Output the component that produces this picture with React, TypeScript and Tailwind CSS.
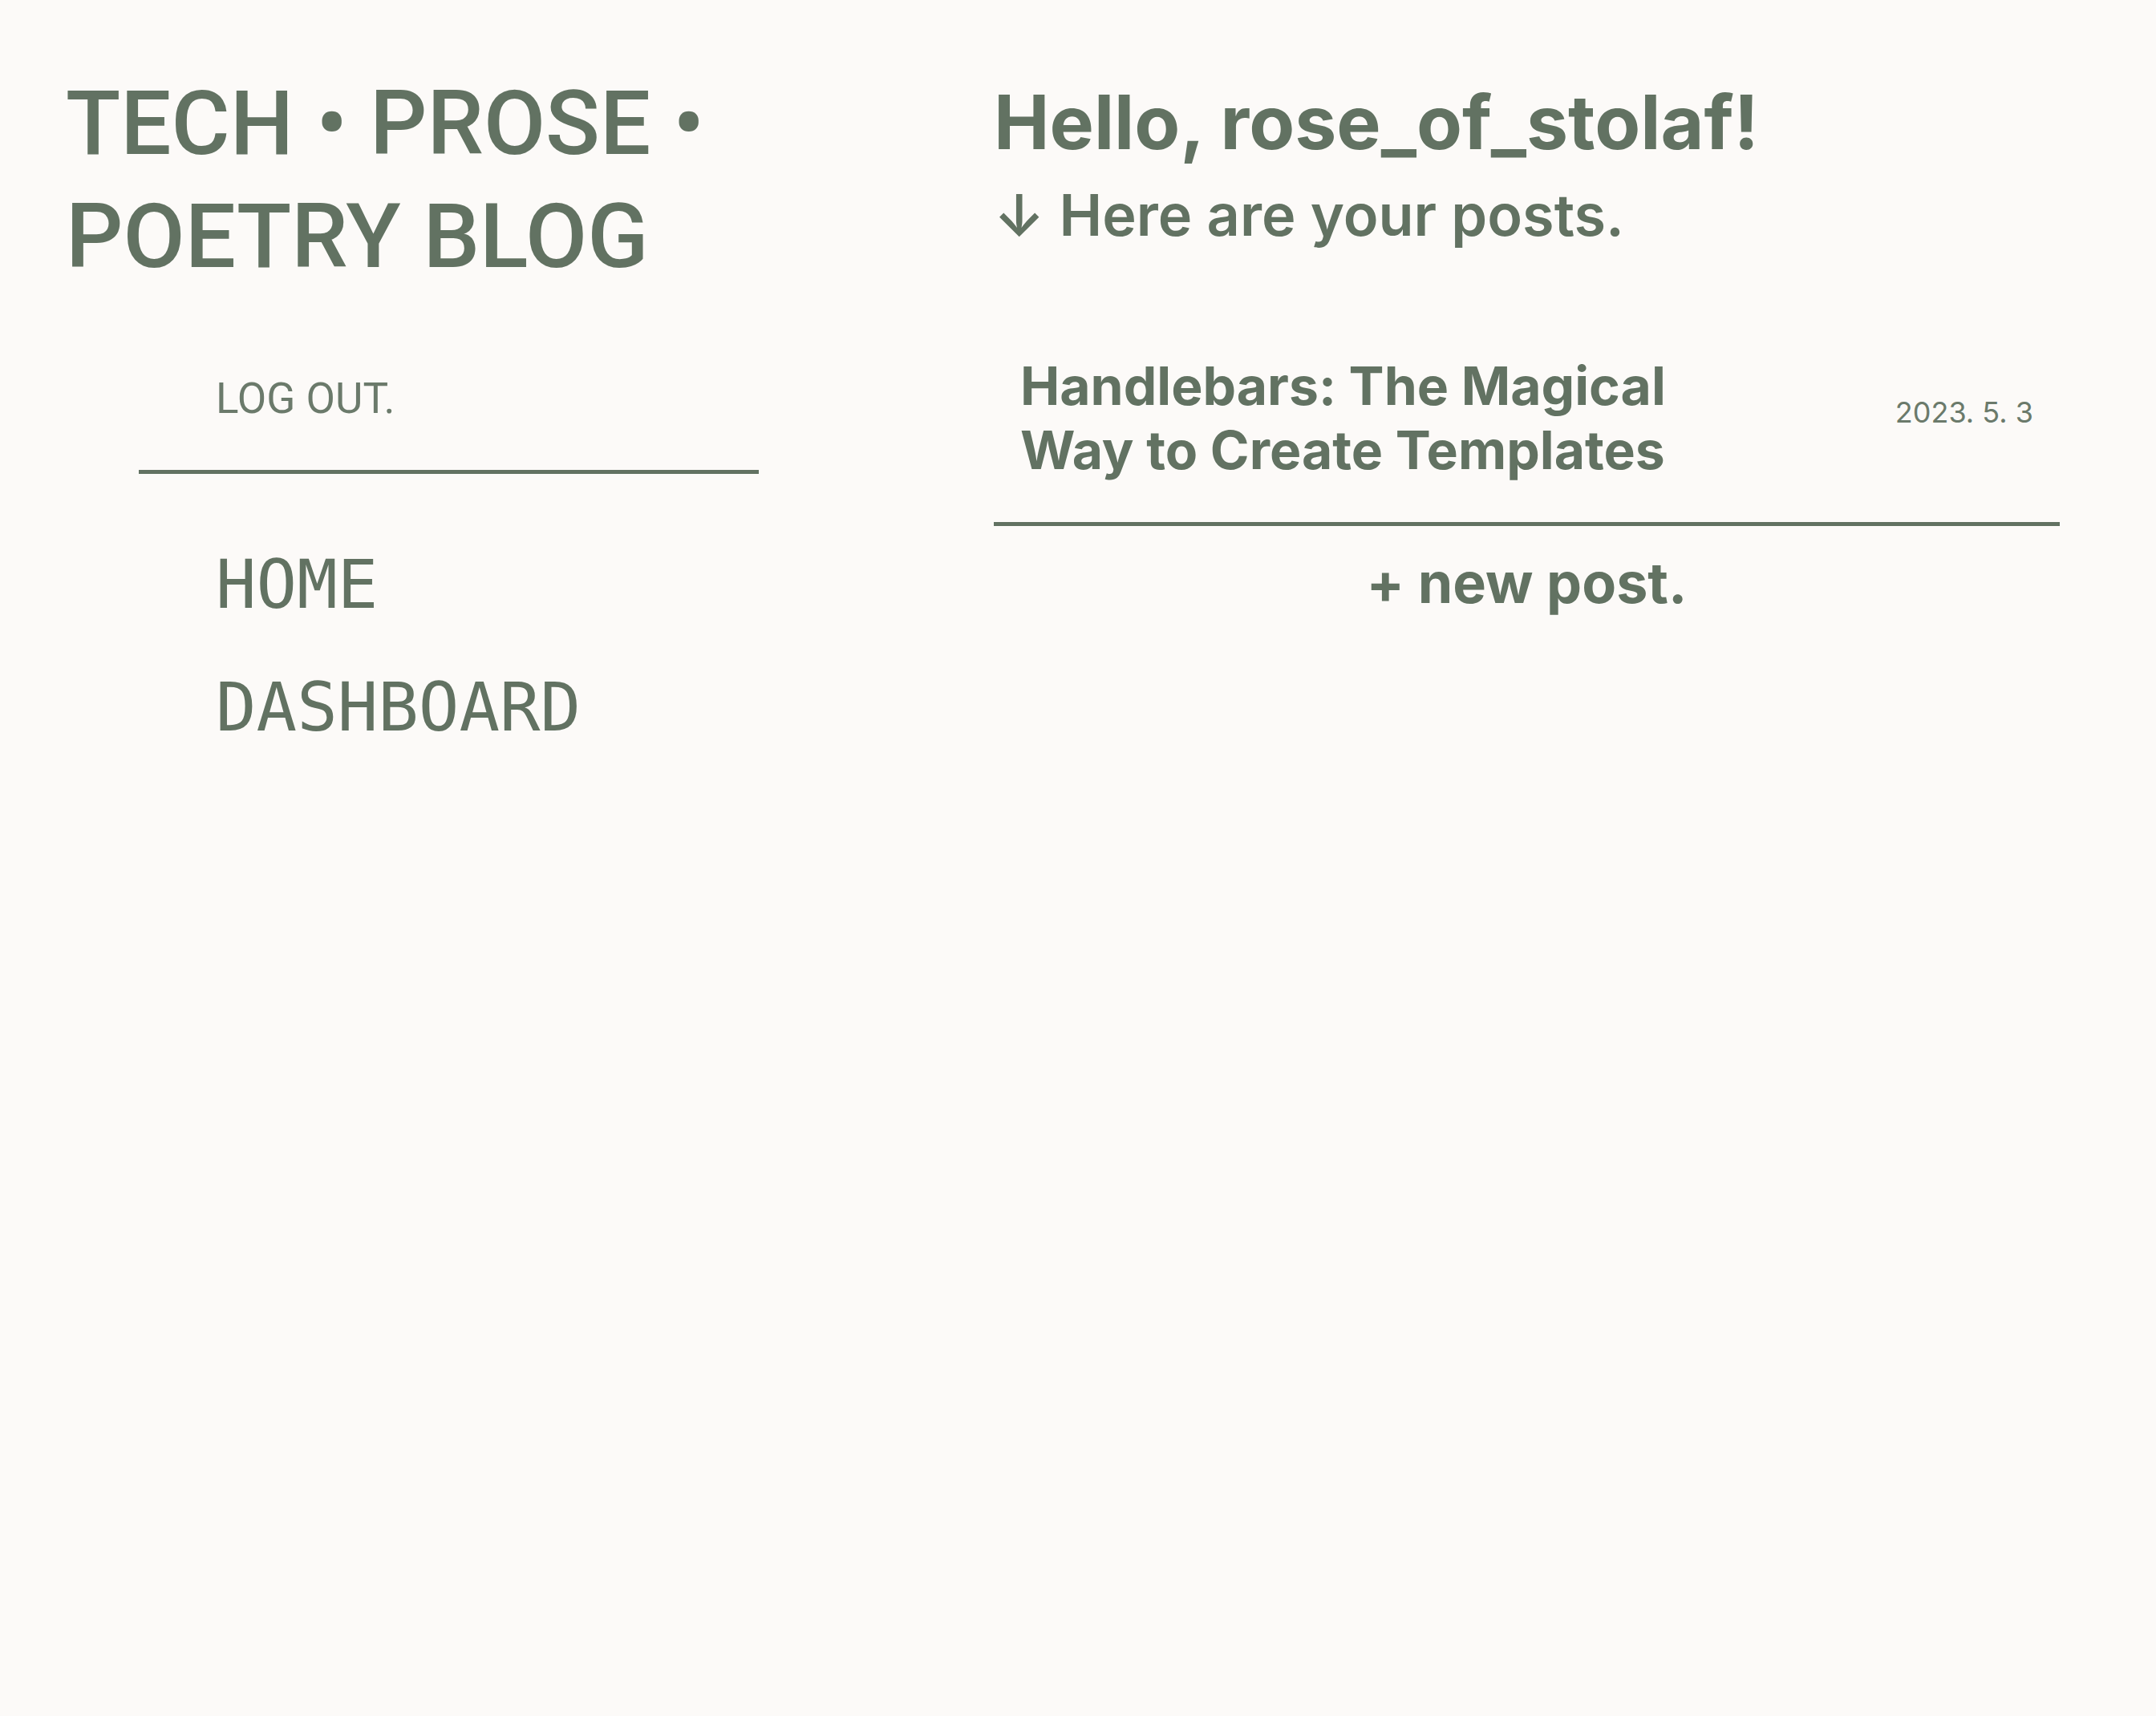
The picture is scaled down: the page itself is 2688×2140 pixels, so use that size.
import React from "react";

const posts = [
  { title: "Handlebars: The Magical Way to Create Templates", date: "2023. 5. 3" },
];

export default function App() {
  return (
    <div className="min-h-screen w-full bg-[#fcfaf8] text-[#627262] flex pl-[82px] pt-[83px] font-['Roboto',sans-serif]">
      <aside className="w-[1000px] shrink-0">
        <h1 className="w-[900px] text-[112px] leading-[141px] font-medium">TECH • PROSE • POETRY BLOG</h1>
        <div className="mt-[102px] ml-[91px] w-[773px] border-b-[5px] border-[#627262] pl-[96px] pb-[59px]">
          <a href="#" className="block text-[53px] leading-[60px] font-normal text-[#6b7a6b]">LOG OUT.</a>
        </div>
        <nav className="mt-[82px] pl-[187px] flex flex-col gap-[41px] font-['DejaVu_Sans_Mono',monospace]">
          <a href="#" className="text-[84px] leading-[112px]">HOME</a>
          <a href="#" className="text-[84px] leading-[112px]">DASHBOARD</a>
        </nav>
      </aside>
      <main className="ml-[157px] mt-[14px] w-[1329px] font-['Inter',sans-serif]">
        <h2 className="text-[93px] leading-[110px] font-bold">Hello, rose_of_stolaf!</h2>
        <p className="mt-[16px] text-[72px] leading-[90px] font-semibold">↓ Here are your posts.</p>
        <ul className="mt-[128px]">
          {posts.map((p) => (
            <li key={p.title} className="flex items-center justify-between border-b-[5px] border-[#627262] pl-[33px] pr-[33px] pb-[50px]">
              <a href="#" className="w-[900px] text-[66px] leading-[80px] font-bold">{p.title}</a>
              <span className="mb-[14px] text-[36px] leading-[44px] text-[#6b7a6b]">{p.date}</span>
            </li>
          ))}
        </ul>
        <div className="mt-[31px] text-center">
          <a href="#" className="text-[70px] leading-[80px] font-bold">+ new post.</a>
        </div>
      </main>
    </div>
  );
}
